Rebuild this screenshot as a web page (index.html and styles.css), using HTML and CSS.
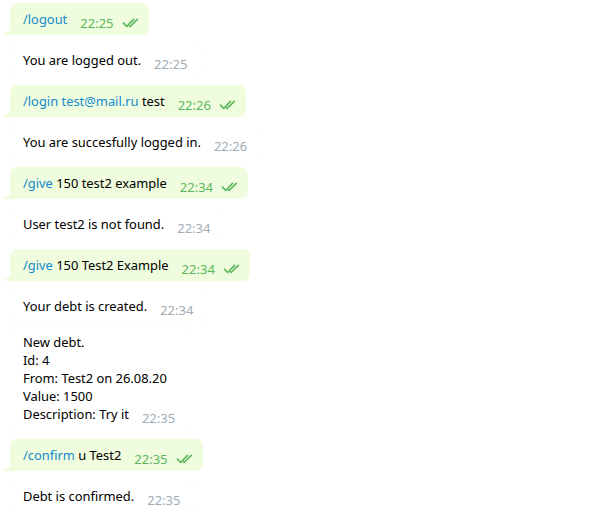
FILE: index.html
```html
<!DOCTYPE html>
<html>
<head>
<meta charset="utf-8">
<link rel="stylesheet" href="styles.css">
</head>
<body>
<div class="chat">
  <div class="msg out"><span class="cmd">/logout</span><span class="meta"><span class="time">22:25</span><svg class="ticks" width="18" height="10" viewBox="0 0 18 10"><path d="M1.5 5.2l3.2 3.3L11.5 1.3M7.6 8l.5.5L15.3 1.3" fill="none" stroke="currentColor" stroke-width="1.7" stroke-linecap="round" stroke-linejoin="round"/></svg></span></div>
  <div class="msg in">You are logged out.<span class="meta"><span class="time">22:25</span></span></div>
  <div class="msg out"><span class="cmd">/login</span> <span class="cmd">test@mail.ru</span> test<span class="meta"><span class="time">22:26</span><svg class="ticks" width="18" height="10" viewBox="0 0 18 10"><path d="M1.5 5.2l3.2 3.3L11.5 1.3M7.6 8l.5.5L15.3 1.3" fill="none" stroke="currentColor" stroke-width="1.7" stroke-linecap="round" stroke-linejoin="round"/></svg></span></div>
  <div class="msg in">You are succesfully logged in.<span class="meta"><span class="time">22:26</span></span></div>
  <div class="msg out"><span class="cmd">/give</span> 150 test2 example<span class="meta"><span class="time">22:34</span><svg class="ticks" width="18" height="10" viewBox="0 0 18 10"><path d="M1.5 5.2l3.2 3.3L11.5 1.3M7.6 8l.5.5L15.3 1.3" fill="none" stroke="currentColor" stroke-width="1.7" stroke-linecap="round" stroke-linejoin="round"/></svg></span></div>
  <div class="msg in">User test2 is not found.<span class="meta"><span class="time">22:34</span></span></div>
  <div class="msg out"><span class="cmd">/give</span> 150 Test2 Example<span class="meta"><span class="time">22:34</span><svg class="ticks" width="18" height="10" viewBox="0 0 18 10"><path d="M1.5 5.2l3.2 3.3L11.5 1.3M7.6 8l.5.5L15.3 1.3" fill="none" stroke="currentColor" stroke-width="1.7" stroke-linecap="round" stroke-linejoin="round"/></svg></span></div>
  <div class="group">
    <div class="msg in">Your debt is created.<span class="meta"><span class="time">22:34</span></span></div>
    <div class="msg in">New debt.<br>Id: 4<br>From: Test2 on 26.08.20<br>Value: 1500<br>Description: Try it<span class="meta"><span class="time">22:35</span></span></div>
  </div>
  <div class="msg out"><span class="cmd">/confirm</span> u Test2<span class="meta"><span class="time">22:35</span><svg class="ticks" width="18" height="10" viewBox="0 0 18 10"><path d="M1.5 5.2l3.2 3.3L11.5 1.3M7.6 8l.5.5L15.3 1.3" fill="none" stroke="currentColor" stroke-width="1.7" stroke-linecap="round" stroke-linejoin="round"/></svg></span></div>
  <div class="msg in">Debt is confirmed.<span class="meta"><span class="time">22:35</span></span></div>
</div>
</body>
</html>
```

FILE: styles.css
```css
html, body {
  margin: 0;
  padding: 0;
  background: #ffffff;
}
body {
  font-family: "Noto Sans", "Open Sans", "DejaVu Sans", sans-serif;
  font-size: 12.9px;
  color: #000000;
}
.chat {
  display: flex;
  flex-direction: column;
  align-items: flex-start;
  gap: 9px;
  padding: 3px 0 0 10px;
}
.group {
  display: flex;
  flex-direction: column;
  align-items: flex-start;
  gap: 4px;
}
.msg {
  position: relative;
  border-radius: 7px;
  padding: 7px 9px 7px 13px;
  line-height: 18px;
  white-space: nowrap;
}
.msg.out {
  background: #effdde;
  border-bottom-left-radius: 0;
}
.msg.out::before {
  content: "";
  position: absolute;
  left: -6px;
  bottom: 0;
  width: 6px;
  height: 8px;
  background: radial-gradient(circle at 0 0, transparent 6px, #effdde 6.5px);
}
.msg.in {
  background: #ffffff;
  box-shadow: 0 0 1px rgba(0, 0, 0, 0.06);
  padding-right: 14px;
}
.cmd {
  color: #168acd;
}
.meta {
  display: inline-flex;
  align-items: center;
  gap: 8px;
  margin-left: 13px;
  line-height: 10px;
  font-size: 13px;
  vertical-align: -4px;
}
.out .meta {
  color: #5db760;
}
.in .meta {
  color: #a1acb6;
}
.ticks {
  display: block;
}
```
